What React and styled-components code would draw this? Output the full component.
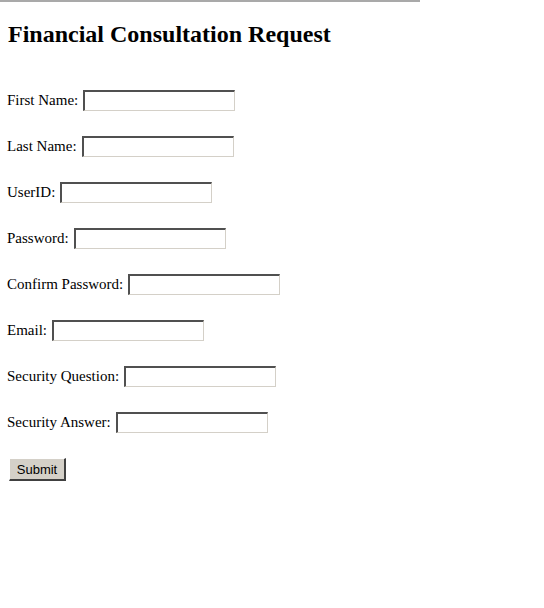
import React from 'react';
import styled, { createGlobalStyle } from 'styled-components';

const GlobalStyle = createGlobalStyle`
    html, body {
        margin: 0;
        padding: 0;
        background: #ffffff;
    }
    body {
        font-family: "Liberation Serif", "Times New Roman", serif;
        color: #000000;
    }
`;

const Page = styled.div`
    display: flex;
    flex-direction: column;
`;

const TopRule = styled.div`
    width: 420px;
    height: 2px;
    background: #a9a9a9;
`;

const Content = styled.div`
    padding: 0 7px;
    display: flex;
    flex-direction: column;
`;

const Title = styled.h2`
    margin: 18px 0 0 1px;
    font-size: 24px;
    line-height: 28px;
    font-weight: bold;
`;

const Form = styled.form`
    margin-top: 42px;
    display: flex;
    flex-direction: column;
    gap: 25px;
`;

const Row = styled.div`
    display: flex;
    align-items: center;
    height: 21px;
`;

const Label = styled.label`
    font-size: 15px;
    line-height: 21px;
    margin-right: 5px;
    white-space: nowrap;
`;

const Field = styled.input`
    box-sizing: border-box;
    width: 152px;
    height: 21px;
    margin: 0;
    padding: 1px 3px;
    background: #ffffff;
    border-style: solid;
    border-width: 2px 1px 1px 2px;
    border-color: #505050 #d4d0c8 #d4d0c8 #505050;
    font-family: "Liberation Sans", Arial, sans-serif;
    font-size: 13px;
    outline: none;
`;

const SubmitButton = styled.button`
    box-sizing: border-box;
    align-self: flex-start;
    margin-left: 2px;
    width: 57px;
    height: 23px;
    padding: 0;
    background: #d4d0c8;
    border-style: solid;
    border-width: 1px 2px 2px 1px;
    border-color: #ffffff #404040 #404040 #ffffff;
    font-family: "Liberation Sans", Arial, sans-serif;
    font-size: 13px;
    color: #000000;
`;

const fields = [
    { id: 'first', label: 'First Name:', type: 'text' },
    { id: 'last', label: 'Last Name:', type: 'text' },
    { id: 'user', label: 'UserID:', type: 'text' },
    { id: 'pass', label: 'Password:', type: 'password' },
    { id: 'confirm', label: 'Confirm Password:', type: 'password' },
    { id: 'email', label: 'Email:', type: 'text' },
    { id: 'question', label: 'Security Question:', type: 'text' },
    { id: 'answer', label: 'Security Answer:', type: 'text' },
];

const App = () => {
    return (
        <Page>
            <GlobalStyle />
            <TopRule />
            <Content>
                <Title>Financial Consultation Request</Title>
                <Form onSubmit={(e) => e.preventDefault()}>
                    {fields.map((f) => (
                        <Row key={f.id}>
                            <Label htmlFor={f.id}>{f.label}</Label>
                            <Field id={f.id} type={f.type} />
                        </Row>
                    ))}
                    <SubmitButton type="submit">Submit</SubmitButton>
                </Form>
            </Content>
        </Page>
    );
};

export default App;
